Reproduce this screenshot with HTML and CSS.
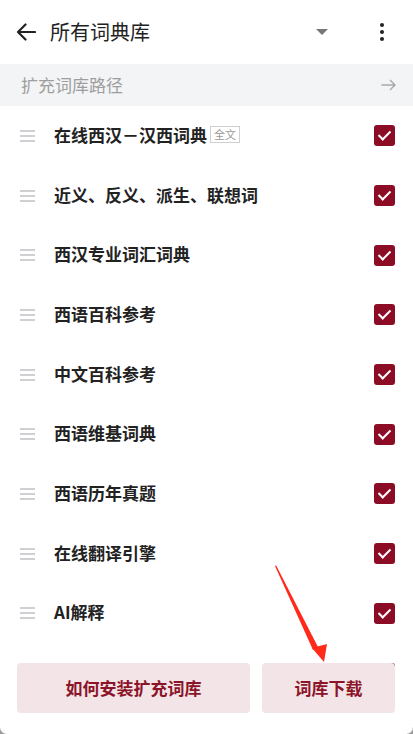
FILE: index.html
```html
<!DOCTYPE html>
<html lang="zh-CN">
<head>
    <meta charset="UTF-8">
    <meta name="viewport" content="width=device-width, initial-scale=1.0">
    <title>所有词典库</title>
    <link rel="stylesheet" href="styles.css">
</head>
<body>
<div class="screen">
    <!-- 顶部标题栏 -->
    <header class="topbar">
        <svg class="back" width="20" height="18" viewBox="0 0 20 18">
            <path d="M19 9H2M9.5 1.5L2 9l7.5 7.5" fill="none" stroke="#222" stroke-width="2.2" stroke-linecap="round" stroke-linejoin="round"/>
        </svg>
        <h1 class="title">所有词典库</h1>
        <span class="caret"></span>
        <span class="more"><i></i><i></i><i></i></span>
    </header>

    <!-- 扩充词库路径 -->
    <div class="path-bar">
        <span>扩充词库路径</span>
        <svg width="15" height="12" viewBox="0 0 15 12">
            <path d="M0.5 6H14M9 1l5 5-5 5" fill="none" stroke="#a8a8a8" stroke-width="1.4"/>
        </svg>
    </div>

    <!-- 词典列表 -->
    <ul class="dict-list">
        <li class="dict-item"><span class="grip"></span><span class="name">在线西汉－汉西词典<em class="tag">全文</em></span><span class="check"></span></li>
        <li class="dict-item"><span class="grip"></span><span class="name">近义、反义、派生、联想词</span><span class="check"></span></li>
        <li class="dict-item"><span class="grip"></span><span class="name">西汉专业词汇词典</span><span class="check"></span></li>
        <li class="dict-item"><span class="grip"></span><span class="name">西语百科参考</span><span class="check"></span></li>
        <li class="dict-item"><span class="grip"></span><span class="name">中文百科参考</span><span class="check"></span></li>
        <li class="dict-item"><span class="grip"></span><span class="name">西语维基词典</span><span class="check"></span></li>
        <li class="dict-item"><span class="grip"></span><span class="name">西语历年真题</span><span class="check"></span></li>
        <li class="dict-item"><span class="grip"></span><span class="name">在线翻译引擎</span><span class="check"></span></li>
        <li class="dict-item"><span class="grip"></span><span class="name">AI解释</span><span class="check"></span></li>
        <!-- 被底部按钮遮住的下一项 -->
        <li class="dict-item"><span class="grip"></span><span class="name"></span><span class="check"></span></li>
    </ul>

    <!-- 底部按钮 -->
    <div class="footer">
        <button class="btn btn-wide">如何安装扩充词库</button>
        <button class="btn btn-narrow">词库下载</button>
    </div>

    <!-- 红色指示箭头 -->
    <svg class="pointer" width="413" height="734" viewBox="0 0 413 734">
        <polygon points="275,566 276.2,565.6 318,647 313,650" fill="#ff2a1a"/>
        <polygon points="312,648 327,644 324,662" fill="#ff2a1a"/>
    </svg>
</div>
</body>
</html>
```

FILE: styles.css
```css
html, body {
    margin: 0;
    padding: 0;
    background-color: #9c9c9c;
}
.screen {
    position: relative;
    width: 413px;
    height: 734px;
    overflow: hidden;
    background-color: #fff;
    border-radius: 0 0 7px 7px;
    font-family: "Noto Sans CJK SC", "Noto Sans", sans-serif;
    color: #222;
}
/* 标题栏 */
.topbar {
    display: flex;
    align-items: center;
    height: 64px;
    padding: 0 0 0 16px;
}
.back {
    display: block;
}
.title {
    margin: 0 0 2px 14px;
    font-size: 20px;
    font-weight: 400;
    color: #222;
    flex: 1;
}
.caret {
    width: 0;
    height: 0;
    border-left: 6px solid transparent;
    border-right: 6px solid transparent;
    border-top: 6px solid #777;
    margin-right: 52px;
}
.more {
    display: flex;
    flex-direction: column;
    gap: 2.6px;
    margin-right: 29px;
}
.more i {
    display: block;
    width: 4px;
    height: 4px;
    border-radius: 50%;
    background-color: #222;
}
/* 路径栏 */
.path-bar {
    display: flex;
    align-items: center;
    justify-content: space-between;
    height: 42px;
    padding: 0 17px 0 21px;
    background-color: #f3f4f6;
    color: #9e9e9e;
    font-size: 17px;
}
.path-bar span {
    margin-bottom: 2px;
}
/* 列表 */
.dict-list {
    list-style: none;
    margin: 0;
    padding: 0;
}
.dict-item {
    display: flex;
    align-items: center;
    height: 59.7px;
    padding: 0 18px 0 20px;
}
.grip {
    width: 15px;
    height: 12px;
    border-top: 2px solid #cfd0d4;
    border-bottom: 2px solid #cfd0d4;
    position: relative;
    box-sizing: border-box;
}
.grip::after {
    content: "";
    position: absolute;
    left: 0;
    right: 0;
    top: 3px;
    border-top: 2px solid #cfd0d4;
}
.name {
    flex: 1;
    margin: 0 0 3px 19px;
    font-size: 17px;
    font-weight: 700;
    color: #222;
    display: flex;
    align-items: center;
}
.tag {
    font-style: normal;
    font-weight: 400;
    font-size: 11px;
    color: #9a9a9a;
    border: 1px solid #cfcfcf;
    padding: 0 3px;
    line-height: 15px;
    margin-left: 3px;
}
.check {
    position: relative;
    width: 21px;
    height: 21px;
    border-radius: 3px;
    background-color: #8c0c25;
}
.check::after {
    content: "";
    position: absolute;
    left: 7px;
    top: 3px;
    width: 5px;
    height: 10px;
    border-right: 2.4px solid #fff;
    border-bottom: 2.4px solid #fff;
    transform: rotate(45deg);
}
/* 底部按钮 */
.footer {
    position: absolute;
    left: 17px;
    right: 18px;
    bottom: 21px;
    display: flex;
    gap: 12px;
}
.btn {
    height: 50px;
    border: none;
    border-radius: 4px;
    background-color: #f2e4e7;
    color: #8c1429;
    font-family: inherit;
    font-size: 17px;
    font-weight: 700;
    padding: 0 0 2px;
}
.btn-wide {
    width: 233px;
}
.btn-narrow {
    flex: 1;
}
.pointer {
    position: absolute;
    left: 0;
    top: 0;
    pointer-events: none;
}
```
